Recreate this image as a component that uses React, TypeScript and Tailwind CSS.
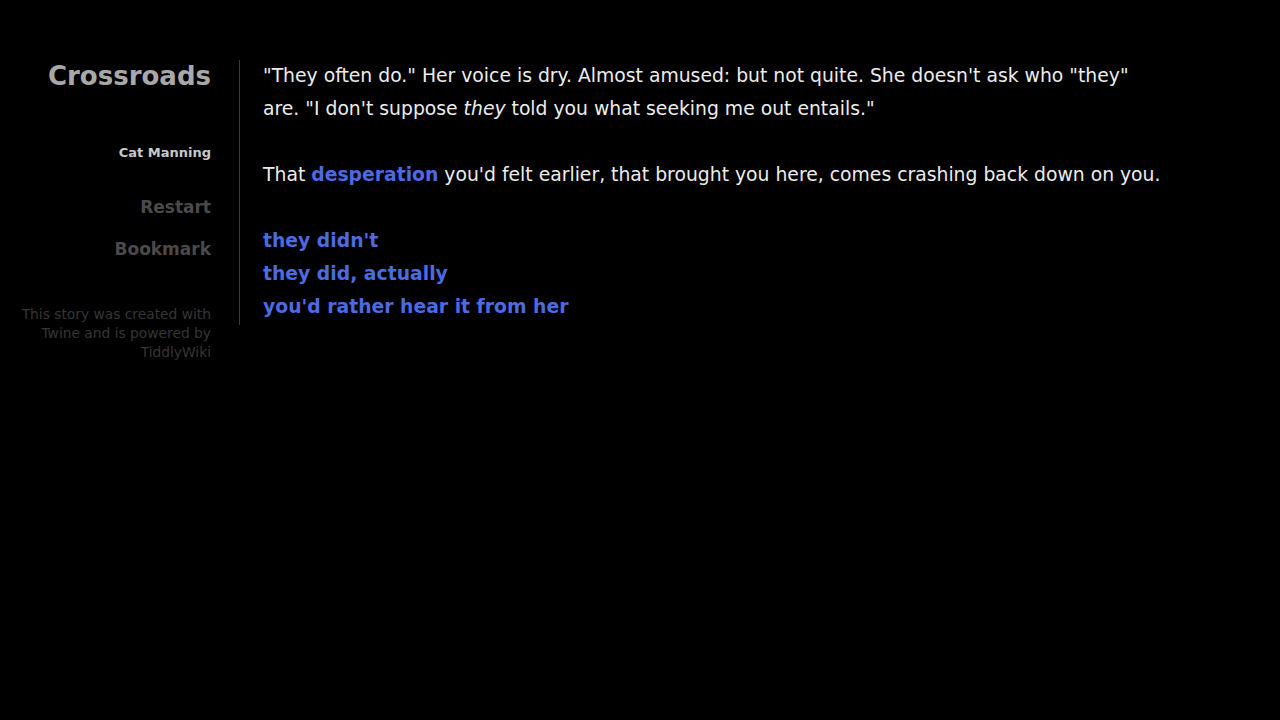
export default function App() {
  return (
    <div className="min-h-screen w-full bg-black pt-[58px] font-['DejaVu_Sans',Verdana,sans-serif]">
      <div className="flex">
        <div className="ml-[16px] w-[195px] shrink-0 pb-[10px] text-right">
          <h1 className="text-[26px] font-bold leading-[36px] text-[#a8a8a8]">Crossroads</h1>
          <p className="mt-[50px] text-[13px] font-bold leading-[18px] text-[#c8c8c8]">Cat Manning</p>
          <div className="mt-[33px] flex flex-col gap-[18px] text-[17px] font-bold leading-[24px] text-[#4a4a4a]">
            <span>Restart</span>
            <span>Bookmark</span>
          </div>
          <p className="mt-[44px] text-[13.8px] leading-[19px] text-[#363636]">
            This story was created with Twine and is powered by TiddlyWiki
          </p>
        </div>
        <div className="ml-[28px] mt-[2px] h-[265px] self-start border-l border-[#3a3a3a]" />
        <div className="ml-[23px] max-w-[905px] pt-[1px] text-[18.8px] leading-[33px] text-[#ececec]">
          <p>
            "They often do." Her voice is dry. Almost amused: but not quite. She doesn't ask who "they" are. "I don't
            suppose <em>they</em> told you what seeking me out entails."
          </p>
          <p className="mt-[33px] whitespace-nowrap">
            That <span className="font-bold text-[#4c6be0]">desperation</span> you'd felt earlier, that brought you here,
            comes crashing back down on you.
          </p>
          <div className="mt-[33px] flex flex-col items-start font-bold text-[#4c6be0]">
            <span>they didn't</span>
            <span>they did, actually</span>
            <span>you'd rather hear it from her</span>
          </div>
        </div>
      </div>
    </div>
  );
}
